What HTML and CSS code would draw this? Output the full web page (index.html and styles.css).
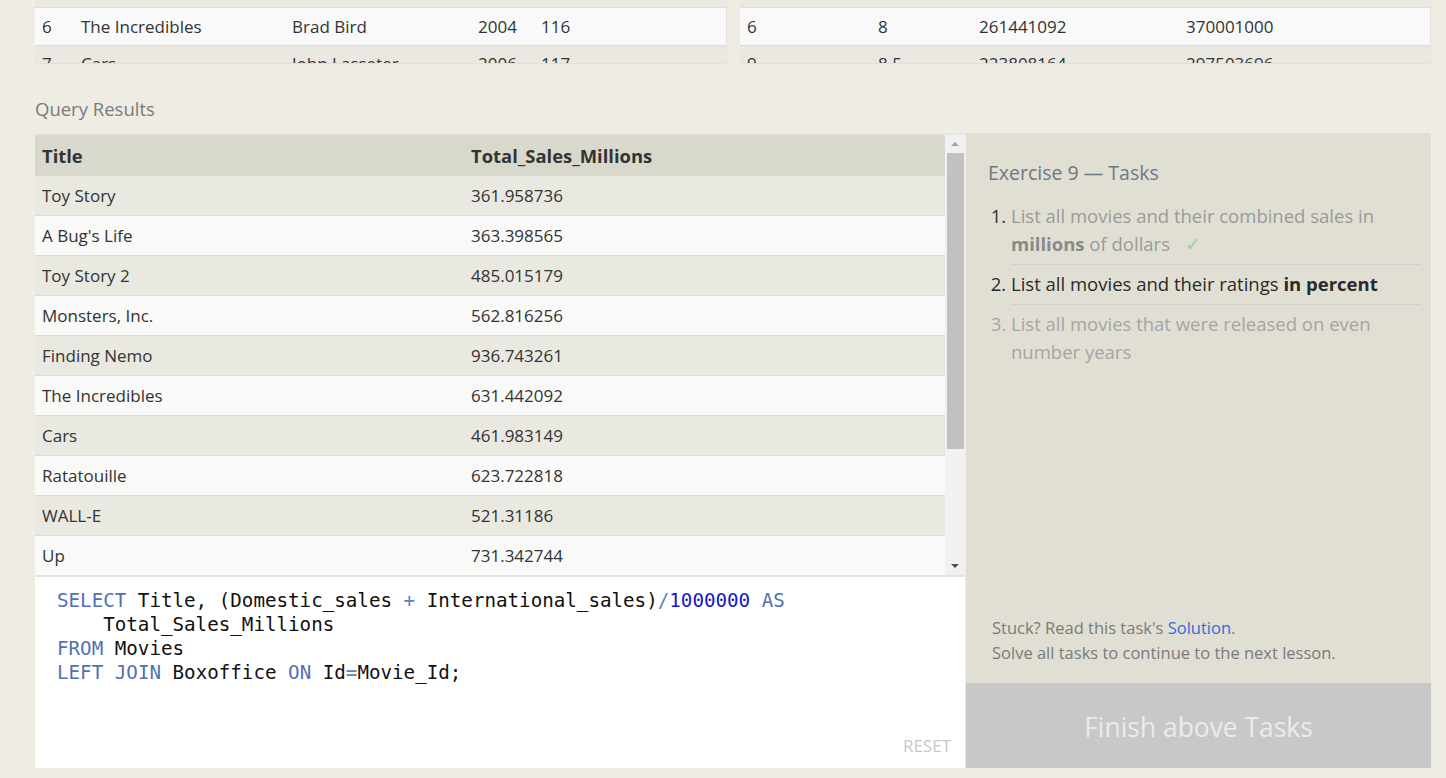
FILE: index.html
```html
<!DOCTYPE html>
<html>
<head>
<meta charset="utf-8">
<link rel="stylesheet" href="styles.css">
</head>
<body>
<div class="page">
  <div class="top-tables">
    <div class="tbl-clip">
      <table class="data-table movies">
        <tr class="row-a"><td>5</td><td>Finding Nemo</td><td>Andrew Stanton</td><td>2003</td><td>107</td></tr>
        <tr class="row-b"><td>6</td><td>The Incredibles</td><td>Brad Bird</td><td>2004</td><td>116</td></tr>
        <tr class="row-a row-next"><td>7</td><td>Cars</td><td>John Lasseter</td><td>2006</td><td>117</td></tr>
      </table>
    </div>
    <div class="tbl-clip">
      <table class="data-table boxoffice">
        <tr class="row-a"><td>5</td><td>8.2</td><td>380843261</td><td>555900000</td></tr>
        <tr class="row-b"><td>6</td><td>8</td><td>261441092</td><td>370001000</td></tr>
        <tr class="row-a row-next"><td>9</td><td>8.5</td><td>223808164</td><td>297503696</td></tr>
      </table>
    </div>
  </div>

  <h2 class="section-title">Query Results</h2>

  <div class="workspace">
    <div class="left-col">
      <div class="results">
        <div class="results-body">
          <table class="result-table">
            <thead><tr><th class="c1">Title</th><th>Total_Sales_Millions</th></tr></thead>
            <tbody>
              <tr class="row-a"><td>Toy Story</td><td>361.958736</td></tr>
              <tr class="row-b"><td>A Bug's Life</td><td>363.398565</td></tr>
              <tr class="row-a"><td>Toy Story 2</td><td>485.015179</td></tr>
              <tr class="row-b"><td>Monsters, Inc.</td><td>562.816256</td></tr>
              <tr class="row-a"><td>Finding Nemo</td><td>936.743261</td></tr>
              <tr class="row-b"><td>The Incredibles</td><td>631.442092</td></tr>
              <tr class="row-a"><td>Cars</td><td>461.983149</td></tr>
              <tr class="row-b"><td>Ratatouille</td><td>623.722818</td></tr>
              <tr class="row-a"><td>WALL-E</td><td>521.31186</td></tr>
              <tr class="row-b"><td>Up</td><td>731.342744</td></tr>
              <tr class="row-a"><td>Toy Story 3</td><td>1063.171911</td></tr>
            </tbody>
          </table>
        </div>
        <div class="scrollbar">
          <div class="sb-arrow sb-up"></div>
          <div class="sb-track"><div class="sb-thumb"></div></div>
          <div class="sb-arrow sb-down"></div>
        </div>
      </div>
      <div class="editor">
        <div class="code">
          <div class="line"><span class="kw">SELECT</span> Title, (Domestic_sales <span class="op">+</span> International_sales)<span class="op">/</span><span class="num">1000000</span> <span class="kw">AS</span></div>
          <div class="line wrap">Total_Sales_Millions</div>
          <div class="line"><span class="kw">FROM</span> Movies</div>
          <div class="line"><span class="kw">LEFT</span> <span class="kw">JOIN</span> Boxoffice <span class="kw">ON</span> Id<span class="op">=</span>Movie_Id;</div>
        </div>
        <div class="reset">RESET</div>
      </div>
    </div>

    <div class="tasks">
      <div class="tasks-main">
        <h3 class="tasks-title">Exercise 9 — Tasks</h3>
        <ol class="task-list">
          <li class="done">List all movies and their combined sales in <b>millions</b> of dollars <span class="check">✓</span></li>
          <li class="active">List all movies and their ratings <b>in percent</b></li>
          <li class="todo">List all movies that were released on even number years</li>
        </ol>
      </div>
      <div class="hint">
        <p>Stuck? Read this task's <a class="link">Solution</a>.</p>
        <p>Solve all tasks to continue to the next lesson.</p>
      </div>
      <div class="finish">Finish above Tasks</div>
    </div>
  </div>
</div>
</body>
</html>
```

FILE: styles.css
```css
html, body {
  margin: 0;
  padding: 0;
  background: #efece4;
  font-family: "Open Sans", "Noto Sans", sans-serif;
  color: #333;
  overflow: hidden;
}

.page {
  padding: 0 15px 0 35px;
}

.top-tables {
  display: grid;
  grid-template-columns: 692px 691px;
  gap: 13px;
}

.tbl-clip {
  height: 64px;
  overflow: hidden;
  background: #eae8e0;
  border-right: 1px solid #e2e0d8;
  border-bottom: 1px solid #e2e0d8;
  box-sizing: border-box;
}

.data-table {
  width: 100%;
  border-collapse: collapse;
  margin-top: -31px;
  font-size: 17px;
  color: #333;
}

.data-table td {
  height: 37px;
  padding: 0 0 0 7px;
  border-top: 1px solid #dddcd6;
  white-space: nowrap;
}

.data-table .row-a { background: #eae8e1; }
.data-table .row-b { background: #f9f9f9; }
.data-table .row-next td { vertical-align: top; padding-top: 6px; }

.movies td:nth-child(1) { width: 32px; }
.movies td:nth-child(2) { width: 204px; }
.movies td:nth-child(3) { width: 179px; }
.movies td:nth-child(4) { width: 56px; }

.boxoffice td:nth-child(1) { width: 124px; }
.boxoffice td:nth-child(2) { width: 94px; }
.boxoffice td:nth-child(3) { width: 200px; }

.section-title {
  margin: 31px 0 0;
  height: 38px;
  font-size: 18.5px;
  font-weight: normal;
  color: #7b7b7b;
  line-height: 28px;
}

.workspace {
  display: grid;
  grid-template-columns: 930px 465px;
  gap: 1px;
  height: 635px;
}

.left-col {
  display: flex;
  flex-direction: column;
  min-height: 0;
}

.results {
  display: flex;
  height: 442px;
  flex: none;
  border-top: 2px solid #e8e6de;
  box-sizing: border-box;
  background: #f9f9f8;
}

.results-body {
  flex: 1;
  overflow: hidden;
}

.result-table {
  width: 100%;
  border-collapse: collapse;
  font-size: 17px;
}

.result-table th {
  height: 41px;
  background: #d9d8cc;
  text-align: left;
  font-weight: bold;
  font-size: 18.4px;
  padding: 0 0 0 7px;
  color: #333;
}

.result-table th.c1 { width: 422px; }

.result-table td {
  height: 39px;
  padding: 0 0 0 7px;
  border-bottom: 1px solid #dcdbd5;
  color: #333;
}

.result-table .row-a { background: #e9e8e1; }
.result-table .row-b { background: #f9f9f8; }

.scrollbar {
  width: 20px;
  background: #f1f1f1;
  display: flex;
  flex-direction: column;
  align-items: center;
}

.sb-arrow {
  height: 17px;
  width: 100%;
  position: relative;
}

.sb-up::after, .sb-down::after {
  content: "";
  position: absolute;
  left: 6px;
  width: 0;
  height: 0;
  border-left: 4px solid transparent;
  border-right: 4px solid transparent;
}

.sb-up::after {
  top: 7px;
  border-bottom: 4px solid #a3a3a3;
}

.sb-down::after {
  top: 6px;
  border-top: 4px solid #505050;
}

.sb-track {
  flex: 1;
  width: 100%;
  display: flex;
  justify-content: center;
}

.sb-thumb {
  margin-top: 1px;
  width: 17px;
  height: 296px;
  background: #c1c1c1;
}

.editor {
  flex: 1;
  min-height: 0;
  background: #fff;
  border-top: 2px solid #e4e2da;
  display: flex;
  flex-direction: column;
  justify-content: space-between;
  padding: 12px 14px 11px 22px;
}

.code {
  font-family: "DejaVu Sans Mono", "Liberation Mono", monospace;
  font-size: 19.2px;
  line-height: 24px;
  color: #111;
}

.code .line { white-space: pre; }
.code .wrap { padding-left: 4ch; }
.kw { color: #5271b5; }
.op { color: #5b7fc4; }
.num { color: #1717c8; }

.reset {
  align-self: flex-end;
  font-size: 17px;
  color: #c8c8c8;
  line-height: 22px;
}

.tasks {
  background: #e1dfd4;
  display: flex;
  flex-direction: column;
  min-height: 0;
}

.tasks-main {
  flex: 1;
  padding: 26px 10px 0 22px;
}

.tasks-title {
  margin: 0 0 14px;
  font-size: 19.5px;
  font-weight: normal;
  color: #6e7885;
  line-height: 28px;
}

.task-list {
  margin: 0;
  padding: 0 0 0 23px;
  font-size: 18.5px;
  line-height: 28px;
}

.task-list li {
  padding: 1px 0 6px;
  border-bottom: 1px solid #d3d1c7;
  margin-bottom: 4px;
}

.task-list li:last-child { border-bottom: none; }

.task-list .done { color: #9a9a9a; }
.task-list .done::marker { color: #333; }
.task-list .done b { color: #8a8a8a; }
.task-list .active { color: #2a2a2a; }
.task-list .todo { color: #a5a5a5; }
.check { color: #94d49f; margin-left: 10px; }

.hint {
  padding: 0 0 18px 26px;
  font-size: 16.5px;
  color: #7a7a7a;
  line-height: 25px;
}

.hint p { margin: 0; }
.link { color: #2f6fdb; }

.finish {
  height: 85px;
  flex: none;
  background: #c8c8c8;
  color: #ebebeb;
  font-size: 26.4px;
  padding-top: 2px;
  box-sizing: border-box;
  display: flex;
  align-items: center;
  justify-content: center;
}
```
